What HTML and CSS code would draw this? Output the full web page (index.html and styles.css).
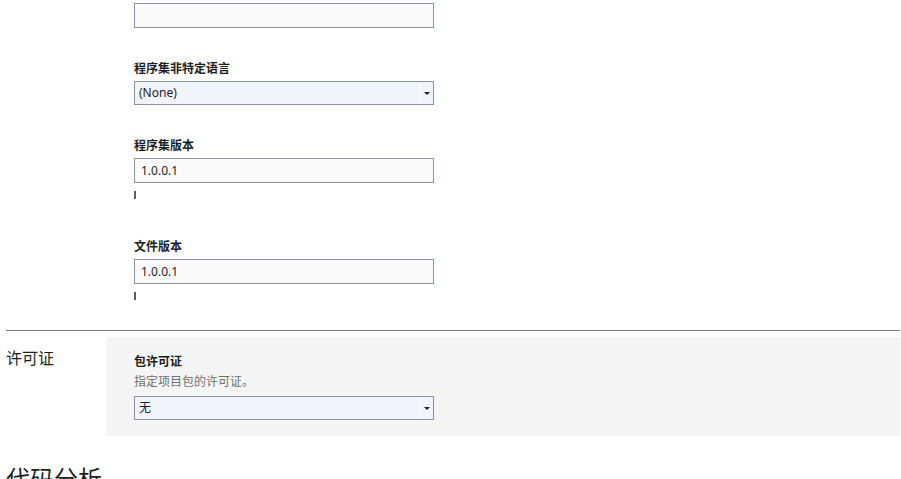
FILE: index.html
```html
<!DOCTYPE html>
<html lang="zh-CN">
<head>
  <meta charset="UTF-8">
  <meta name="viewport" content="width=device-width, initial-scale=1.0">
  <title>项目属性 - 包</title>
  <link rel="stylesheet" href="styles.css">
</head>
<body>
  <div class="section">
    <div class="section-title"></div>
    <div class="section-body">
      <div class="field first">
        <input type="text" class="text-box" value="">
      </div>

      <div class="field">
        <label class="field-label">程序集非特定语言</label>
        <div class="dropdown">
          <span class="dropdown-value">(None)</span>
          <span class="dropdown-arrow"></span>
        </div>
      </div>

      <div class="field">
        <label class="field-label">程序集版本</label>
        <input type="text" class="text-box" value="1.0.0.1">
        <div class="marker"></div>
      </div>

      <div class="field">
        <label class="field-label">文件版本</label>
        <input type="text" class="text-box" value="1.0.0.1">
        <div class="marker"></div>
      </div>
    </div>
  </div>

  <hr class="divider">

  <div class="section">
    <div class="section-title">许可证</div>
    <div class="section-body panel">
      <label class="field-label">包许可证</label>
      <div class="field-desc">指定项目包的许可证。</div>
      <div class="dropdown">
        <span class="dropdown-value">无</span>
        <span class="dropdown-arrow"></span>
      </div>
    </div>
  </div>

  <h2 class="heading">代码分析</h2>
</body>
</html>
```

FILE: styles.css
```css
body {
  margin: 0;
  font-family: "Noto Sans", "Noto Sans CJK SC", sans-serif;
  font-size: 12px;
  color: #1e1e1e;
  background: #ffffff;
  overflow: hidden;
}

.section {
  display: grid;
  grid-template-columns: 100px 794px;
  margin-left: 6px;
}

.section-title {
  font-size: 16px;
  line-height: 20px;
  padding-top: 11px;
  color: #1e1e1e;
}

.section-body {
  padding-left: 28px;
}

.field {
  display: flex;
  flex-direction: column;
  align-items: flex-start;
  margin-top: 33px;
}

.field.first {
  margin-top: 3px;
}

.field-label {
  display: block;
  font-weight: bold;
  line-height: 16px;
  margin-bottom: 4px;
}

.field-desc {
  color: #717171;
  line-height: 16px;
  margin-top: 1px;
  margin-bottom: 6px;
}

.text-box {
  box-sizing: border-box;
  width: 300px;
  height: 25px;
  margin: 0;
  padding: 0 6px;
  border: 1px solid #8a93a5;
  background: #fafafa;
  font-family: inherit;
  font-size: 12px;
  color: #1e1e1e;
  outline: none;
}

.dropdown {
  box-sizing: border-box;
  display: flex;
  align-items: center;
  width: 300px;
  height: 24px;
  border: 1px solid #8a93a5;
  background: #f1f4fb;
}

.dropdown-value {
  flex: 1;
  padding-left: 4px;
  line-height: 22px;
}

.dropdown-arrow {
  position: relative;
  width: 13px;
  height: 22px;
  border-left: 1px solid #ffffff;
}

.dropdown-arrow::after {
  content: "";
  position: absolute;
  left: 4px;
  top: 10px;
  border-left: 3px solid transparent;
  border-right: 3px solid transparent;
  border-top: 3px solid #1e1e1e;
}

.marker {
  width: 2px;
  height: 8px;
  margin-top: 8px;
  margin-bottom: 7px;
  background: #5f5f5f;
}

.divider {
  border: none;
  border-top: 1px solid #7a7a7a;
  margin: 23px 1px 6px 6px;
}

.panel {
  background: #f5f5f5;
  padding-top: 17px;
  padding-bottom: 16px;
}

.heading {
  font-size: 24px;
  font-weight: normal;
  margin: 27px 0 0 6px;
  line-height: 32px;
}
```
